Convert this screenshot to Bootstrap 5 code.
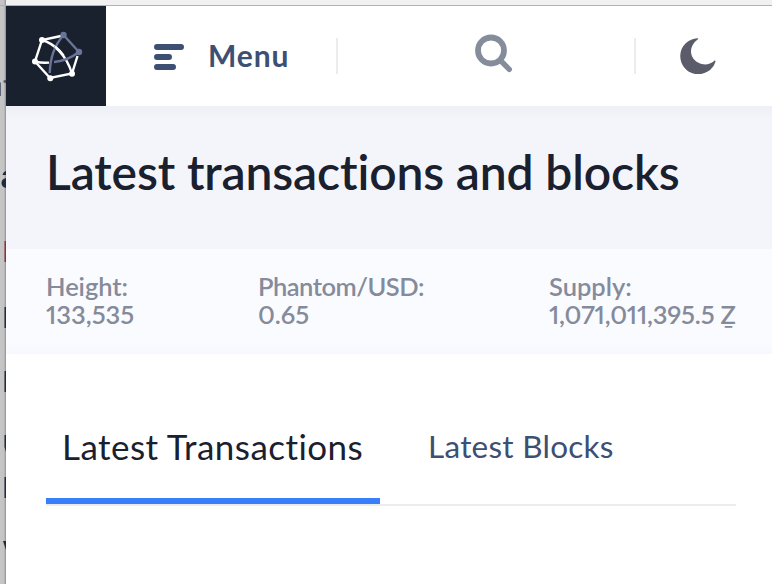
<!DOCTYPE html>
<html lang="en">
<head>
<meta charset="utf-8">
<meta name="viewport" content="width=device-width, initial-scale=1">
<title>Latest transactions and blocks</title>
<link href="https://cdn.jsdelivr.net/npm/bootstrap@5.3.0/dist/css/bootstrap.min.css" rel="stylesheet">
<style>
body{font-family:Lato,"Liberation Sans",sans-serif;font-variant-ligatures:none;font-variant-numeric:proportional-nums;background:#fff;color:#1a202e;height:584px;white-space:nowrap}
.edge{width:6px;flex:none;background:linear-gradient(90deg,#c6c6c6 0,#c3c3c3 4px,#a9a9a9 5px,#8e8e8e 6px)}
.window-top{height:6px;background:#f1f1f1;border-bottom:1px solid #b2b2b2}
.topbar{height:100px}
.brand{width:100px;height:100px;background:#1a212e;flex:none}
.menu-btn{width:232px;padding-left:48px;border-right:2px solid #ececec;height:36px;color:#3d4f73}
.menu-btn svg{margin-top:2px}
.menu-label{font-size:30px;font-weight:700;line-height:34px;margin:0 0 2px 24px;letter-spacing:.9px}
.search-btn{width:298px;height:36px;border-right:2px solid #ececec;padding-left:136px}
.search-btn svg{overflow:visible}
.theme-btn{padding-left:43px;height:36px}
.hero{height:143px;padding:37px 40px 0;background:linear-gradient(#eff0f5 0,#f4f5fa 14px)}
.hero h1{font-size:48px;font-weight:600;line-height:58px;letter-spacing:-.14px}
.stats{height:105px;padding:23px 35px 0 40px;background:linear-gradient(#fafbff 92px,#f7f8fd);color:#858b9b;font-size:25.5px;font-weight:600;line-height:28px}
.tabs{margin:57px 36px 0 40px;border-bottom:2px solid #ececec}
.tabs .nav-link{height:93px;padding:15px 16px 0;line-height:40px;border-radius:0}
.tabs .tab-on{width:334px;font-size:35px;letter-spacing:.45px;color:#1a202e;border-bottom:6px solid #397ffa}
.tabs .tab-off{font-size:31.5px;letter-spacing:.25px;color:#3d4f73;margin-left:32px}
.s1{width:212px}.s2{width:291px}
.k1{letter-spacing:-.05px}.v3{letter-spacing:-.2px}.k2{letter-spacing:-.5px}
</style>
<script src="https://cdn.jsdelivr.net/npm/bootstrap@5.3.0/dist/js/bootstrap.bundle.min.js"></script>
</head>
<body class="d-flex overflow-hidden">
<aside class="edge" aria-hidden="true">
<svg class="d-block" width="6" height="584" fill="#1f2b3b">
<path d="M0 5.500H6" stroke="#aeb0b8"/>
<path d="M0 82.500V96" stroke="#5a6577" stroke-width="2"/><path d="M3.500 81.500H6M5.500 80V83" stroke="#4b5564" stroke-width="2"/>
<path d="M2.500 175Q3.500 171.500 6 171V175ZM6 178Q1.500 179 1.500 183T6 188Z"/>
<path d="M4.500 241H6V262H4.500Z" fill="#962d36"/>
<path d="M4.500 307H6V328H4.500ZM4.500 371H6V392H4.500ZM4.500 435H6V452L4.500 447ZM4.500 477H6V498H4.500ZM3 541H6V550Z"/>
</svg>
</aside>
<div class="flex-grow-1">
<div class="window-top"></div>
<header class="topbar d-flex align-items-center">
<a class="brand" href="#" aria-label="Home">
<svg class="d-block" width="100" height="100" fill="none" stroke-width="2.400">
<g stroke="#fff"><path d="M55 30 36 34 29 55.500 44 72 66 67.500 71.500 50"/><path d="M36 34C47 37 60 48 66 67.500M29 55.500C34 56.800 38 57 43 56.600"/></g>
<g stroke="#697499"><path d="M57.500 29 73 46"/><path d="M57.500 29C48 40 44 52 43.800 67"/><path d="M73 46C65 52 56 55.500 48 56"/></g>
<path d="M49 40.500C52 43 55 46 57.500 49.500" stroke="#fff"/>
<g fill="#fff"><circle cx="36" cy="34" r="3"/><circle cx="29" cy="55.500" r="3"/><circle cx="44.300" cy="72.300" r="3"/><circle cx="66" cy="67.700" r="3"/></g>
<g fill="#697499"><circle cx="57.500" cy="29" r="3.200"/><circle cx="73" cy="46" r="3.200"/></g>
</svg></a>
<div class="menu-btn d-flex align-items-center">
<svg width="30" height="26" stroke="currentColor" stroke-width="6" stroke-linecap="round"><path d="M3 3H27M3 13H15M3 23H19"/></svg>
<span class="menu-label">Menu</span>
</div>
<div class="search-btn">
<svg class="d-block" width="42" height="36" fill="none" stroke="#858c9c"><circle cx="17" cy="12.500" r="13" stroke-width="5.800"/><path d="M26.500 22.500 35.300 31.300" stroke-width="5.400" stroke-linecap="round"/></svg>
</div>
<div class="theme-btn">
<svg class="d-block" width="38" height="36" fill="#5a5c69"><path d="M18.500.2A18 18 0 1 0 36.500 23.400C36.700 22.500 35.700 22.400 35.100 23 29 28.500 19 27 14.300 20.600 10 14 11.800 6.500 18.600 1.400 19.500.8 19.300.1 18.500.2Z"/></svg>
</div>
</header>
<section class="hero"><h1 class="m-0">Latest transactions and blocks</h1></section>
<section class="stats d-flex">
<div class="s1"><div class="k1">Height:</div><div>133,535</div></div>
<div class="s2"><div class="k2">Phantom/USD:</div><div>0.65</div></div>
<div><div>Supply:</div><div class="v3">1,071,011,395.5 Ẕ</div></div>
</section>
<nav class="tabs nav flex-nowrap">
<a class="nav-link tab-on" href="#">Latest Transactions</a>
<a class="nav-link tab-off" href="#">Latest Blocks</a>
</nav>
</div>
</body>
</html>
